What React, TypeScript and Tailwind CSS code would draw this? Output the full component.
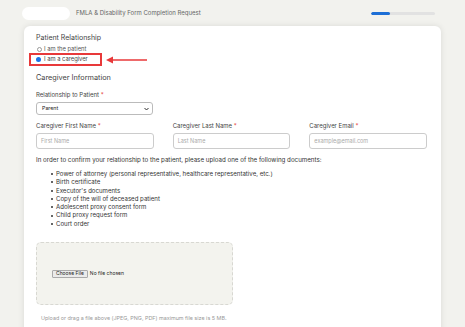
import React from "react";

export default function App() {
  const docs = [
    "Power of attorney (personal representative, healthcare representative, etc.)",
    "Birth certificate",
    "Executor's documents",
    "Copy of the will of deceased patient",
    "Adolescent proxy consent form",
    "Child proxy request form",
    "Court order",
  ];
  return (
    <div
      className="w-[465px] h-[327px] overflow-hidden bg-[#f2f2ee] text-[#333]"
      style={{ fontFamily: "Inter, 'Noto Sans', sans-serif" }}
    >
      {/* header */}
      <div className="flex items-center h-[26px] pl-[22px] pr-[30px]">
        <div className="w-[48px] h-[13px] rounded-full bg-white" />
        <div className="ml-[6px] text-[6px] text-[#666] leading-none">
          FMLA &amp; Disability Form Completion Request
        </div>
        <div className="flex-1" />
        <div className="w-[64px] h-[3px] rounded-full bg-[#e2e2e2] overflow-hidden">
          <div className="w-[19px] h-full bg-[#1d6fd6] rounded-full" />
        </div>
      </div>

      {/* card */}
      <div className="ml-[24px] mr-[24px] bg-white rounded-[6px] shadow-[0_0_6px_rgba(0,0,0,0.1)] pl-[12px] pr-[14px] pt-[7px] h-[320px]">
        <div className="text-[7px] text-[#444] leading-[9px]">Patient Relationship</div>
        <div className="relative mt-[3px]">
          <div className="flex items-center gap-[2px] text-[5.8px] text-[#555] leading-[8px] pl-[1px]">
            <span className="w-[5px] h-[5px] rounded-full border border-[#999] inline-block" />
            I am the patient
          </div>
          <div className="flex items-center mt-[0px]">
            <div className="flex items-center gap-[3px] border-2 border-[#e8393a] h-[13px] w-[73px] ml-[-7px] pl-[5px] text-[5.8px] text-[#444]">
              <span className="w-[5px] h-[5px] rounded-full bg-[#1a73e8] inline-block" />
              I am a caregiver
            </div>
            <svg width="42" height="8" viewBox="0 0 42 8" className="ml-[4px]">
              <line x1="4" y1="4" x2="41" y2="4" stroke="#e8393a" strokeWidth="1.4" />
              <polygon points="0,4 7,0.5 7,7.5" fill="#e8393a" />
            </svg>
          </div>
        </div>

        <div className="mt-[7px] text-[7.3px] text-[#444] leading-[10px]">Caregiver Information</div>

        <div className="mt-[8px] text-[6px] text-[#444] leading-[8px]">
          Relationship to Patient <span className="text-[#e53935]">*</span>
        </div>
        <div className="mt-[3px] w-[117px] h-[13px] border border-[#bbb] rounded-[3px] flex items-center justify-between pl-[5px] pr-[3px] text-[5.3px] text-[#222]">
          <span>Parent</span>
          <svg width="5" height="4" viewBox="0 0 5 4">
            <path d="M0.5 1 L2.5 3 L4.5 1" stroke="#333" strokeWidth="1" fill="none" />
          </svg>
        </div>

        <div className="mt-[7px] grid grid-cols-3 gap-x-[19px] w-[391px]">
          {[
            ["Caregiver First Name", "First Name"],
            ["Caregiver Last Name", "Last Name"],
            ["Caregiver Email", "example@email.com"],
          ].map(([l, p]) => (
            <div key={l}>
              <div className="text-[6px] text-[#444] leading-[8px]">
                {l} <span className="text-[#e53935]">*</span>
              </div>
              <div className="mt-[3px] h-[16px] border border-[#ccc] rounded-[3px] flex items-center pl-[4px] text-[5.5px] text-[#aaa]">
                {p}
              </div>
            </div>
          ))}
        </div>

        <div className="mt-[7px] text-[6.2px] text-[#333] leading-[8px] whitespace-nowrap">
          In order to confirm your relationship to the patient, please upload one of the following documents:
        </div>
        <ul className="mt-[6px] pl-[15px] text-[6.1px] text-[#333] leading-[8.3px]">
          {docs.map((d) => (
            <li key={d} className="flex items-center gap-[3px] whitespace-nowrap">
              <span className="w-[2px] h-[2px] rounded-full bg-[#333] inline-block" />
              {d}
            </li>
          ))}
        </ul>

        <div className="mt-[14px] w-[197px] h-[63px] rounded-[5px] border border-dashed border-[#d8d8d2] bg-[#f3f3ee] flex items-center pl-[15px]">
          <div className="h-[8px] px-[3px] border border-[#aaa] bg-[#ebebeb] rounded-[1px] text-[5px] text-[#222] flex items-center">
            Choose File
          </div>
          <span className="ml-[2px] text-[5px] text-[#222]">No file chosen</span>
        </div>
        <div className="mt-[9px] pl-[5px] text-[5.4px] text-[#999] whitespace-nowrap">
          Upload or drag a file above (JPEG, PNG, PDF) maximum file size is 5 MB.
        </div>
      </div>
    </div>
  );
}
